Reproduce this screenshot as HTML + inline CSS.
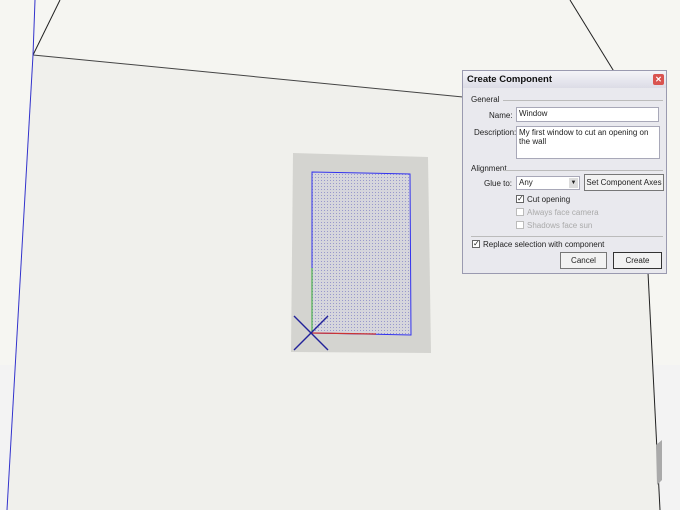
<!DOCTYPE html>
<html><head><style>
body{margin:0;width:680px;height:510px;overflow:hidden;background:#f6f6f2;font-family:"Liberation Sans",sans-serif;position:relative}
svg{position:absolute;left:0;top:0}
.dlg{position:absolute;left:462px;top:70px;width:205px;height:204px;background:#e9e9ee;border:1px solid #9a9ab0;box-sizing:border-box;font-size:8px;color:#222}
.t{position:absolute;left:0;top:0;right:0;height:17px;background:linear-gradient(#f4f4f8,#dcdce6);font-weight:bold;font-size:9.5px;padding:3px 0 0 4px;box-sizing:border-box;color:#111}
.x{position:absolute;right:2px;top:3px;width:11px;height:11px;background:#d9534f;border-radius:2px;color:#fff;font-size:8px;text-align:center;line-height:11px}
.a{position:absolute;white-space:nowrap}
.in{position:absolute;background:#fff;border:1px solid #a8a8b8;box-sizing:border-box;padding:1px 2px}
.btn{position:absolute;background:#f2f2f2;border:1px solid #777;box-sizing:border-box;text-align:center;line-height:15px}
.cb{position:absolute;width:8px;height:8px;border:1px solid #666;background:#fff;box-sizing:border-box;font-size:8px;line-height:6px;text-align:center}
.hr{position:absolute;height:1px;background:#bbb}
.g{color:#aaa}
</style></head><body>
<svg width="680" height="510">
<defs><pattern id="d" width="3" height="3" patternUnits="userSpaceOnUse"><rect width="3" height="3" fill="#d6d6dc"/><rect width="1" height="1" fill="#9999cc"/></pattern></defs>
<rect x="0" y="365" width="680" height="145" fill="#f3f3f3"/>
<polygon points="33,55 640,114 660,510 8,510" fill="#f0f0ec"/>
<polygon points="33,55 60,0 570,0 625,90 640,114" fill="#f5f5f1"/>
<line x1="33" y1="55" x2="60" y2="0" stroke="#222" stroke-width="1"/>
<line x1="570" y1="0" x2="626" y2="91" stroke="#222" stroke-width="1"/>
<line x1="33" y1="55" x2="463" y2="97" stroke="#444" stroke-width="1"/>
<line x1="33" y1="55" x2="7" y2="510" stroke="#3333cc" stroke-width="1"/>
<line x1="35" y1="0" x2="33" y2="55" stroke="#3333cc" stroke-width="1"/>
<line x1="640" y1="114" x2="660" y2="510" stroke="#222" stroke-width="1"/>
<polygon points="656,445 662,440 662,480 657,485" fill="#aaa"/>
<polygon points="293,153 428,157 431,353 291,352" fill="#d4d4d0"/>
<polygon points="312,172 410,174 411,335 312,333" fill="url(#d)" stroke="#3333ee" stroke-width="1"/>
<line x1="312" y1="268" x2="312" y2="333" stroke="#33aa33" stroke-width="1"/>
<line x1="312" y1="333" x2="376" y2="334" stroke="#cc3333" stroke-width="1.2"/>
<line x1="294" y1="316" x2="328" y2="350" stroke="#222299" stroke-width="1.4"/>
<line x1="294" y1="350" x2="328" y2="316" stroke="#222299" stroke-width="1.4"/>
</svg>
<div class="dlg">
<div class="t">Create Component<div class="x">✕</div></div>
<div class="a" style="left:8px;top:24px">General</div><div class="hr" style="left:40px;top:29px;width:160px"></div>
<div class="a" style="left:26px;top:40px">Name:</div>
<div class="in" style="left:53px;top:36px;width:143px;height:15px">Window</div>
<div class="a" style="left:11px;top:57px">Description:</div>
<div class="in" style="left:53px;top:55px;width:144px;height:33px;line-height:9px">My first window to cut an opening on the wall</div>
<div class="a" style="left:8px;top:93px">Alignment</div><div class="hr" style="left:40px;top:99px;width:160px"></div>
<div class="a" style="left:21px;top:108px">Glue to:</div>
<div class="in" style="left:53px;top:105px;width:64px;height:14px">Any<span style="position:absolute;right:1px;top:1px;width:9px;height:10px;background:#ddd;font-size:6px;text-align:center;line-height:10px">▼</span></div>
<div class="btn" style="left:121px;top:103px;width:80px;height:17px">Set Component Axes</div>
<div class="cb" style="left:53px;top:124px">✓</div><div class="a" style="left:64px;top:124px">Cut opening</div>
<div class="cb" style="left:53px;top:137px;border-color:#bbb"></div><div class="a g" style="left:64px;top:137px">Always face camera</div>
<div class="cb" style="left:53px;top:150px;border-color:#bbb"></div><div class="a g" style="left:64px;top:150px">Shadows face sun</div>
<div class="hr" style="left:8px;top:165px;width:192px"></div>
<div class="cb" style="left:9px;top:169px">✓</div><div class="a" style="left:20px;top:169px">Replace selection with component</div>
<div class="btn" style="left:97px;top:181px;width:47px;height:17px">Cancel</div>
<div class="btn" style="left:150px;top:181px;width:49px;height:17px;border:1.5px solid #333">Create</div>
</div>
</body></html>
